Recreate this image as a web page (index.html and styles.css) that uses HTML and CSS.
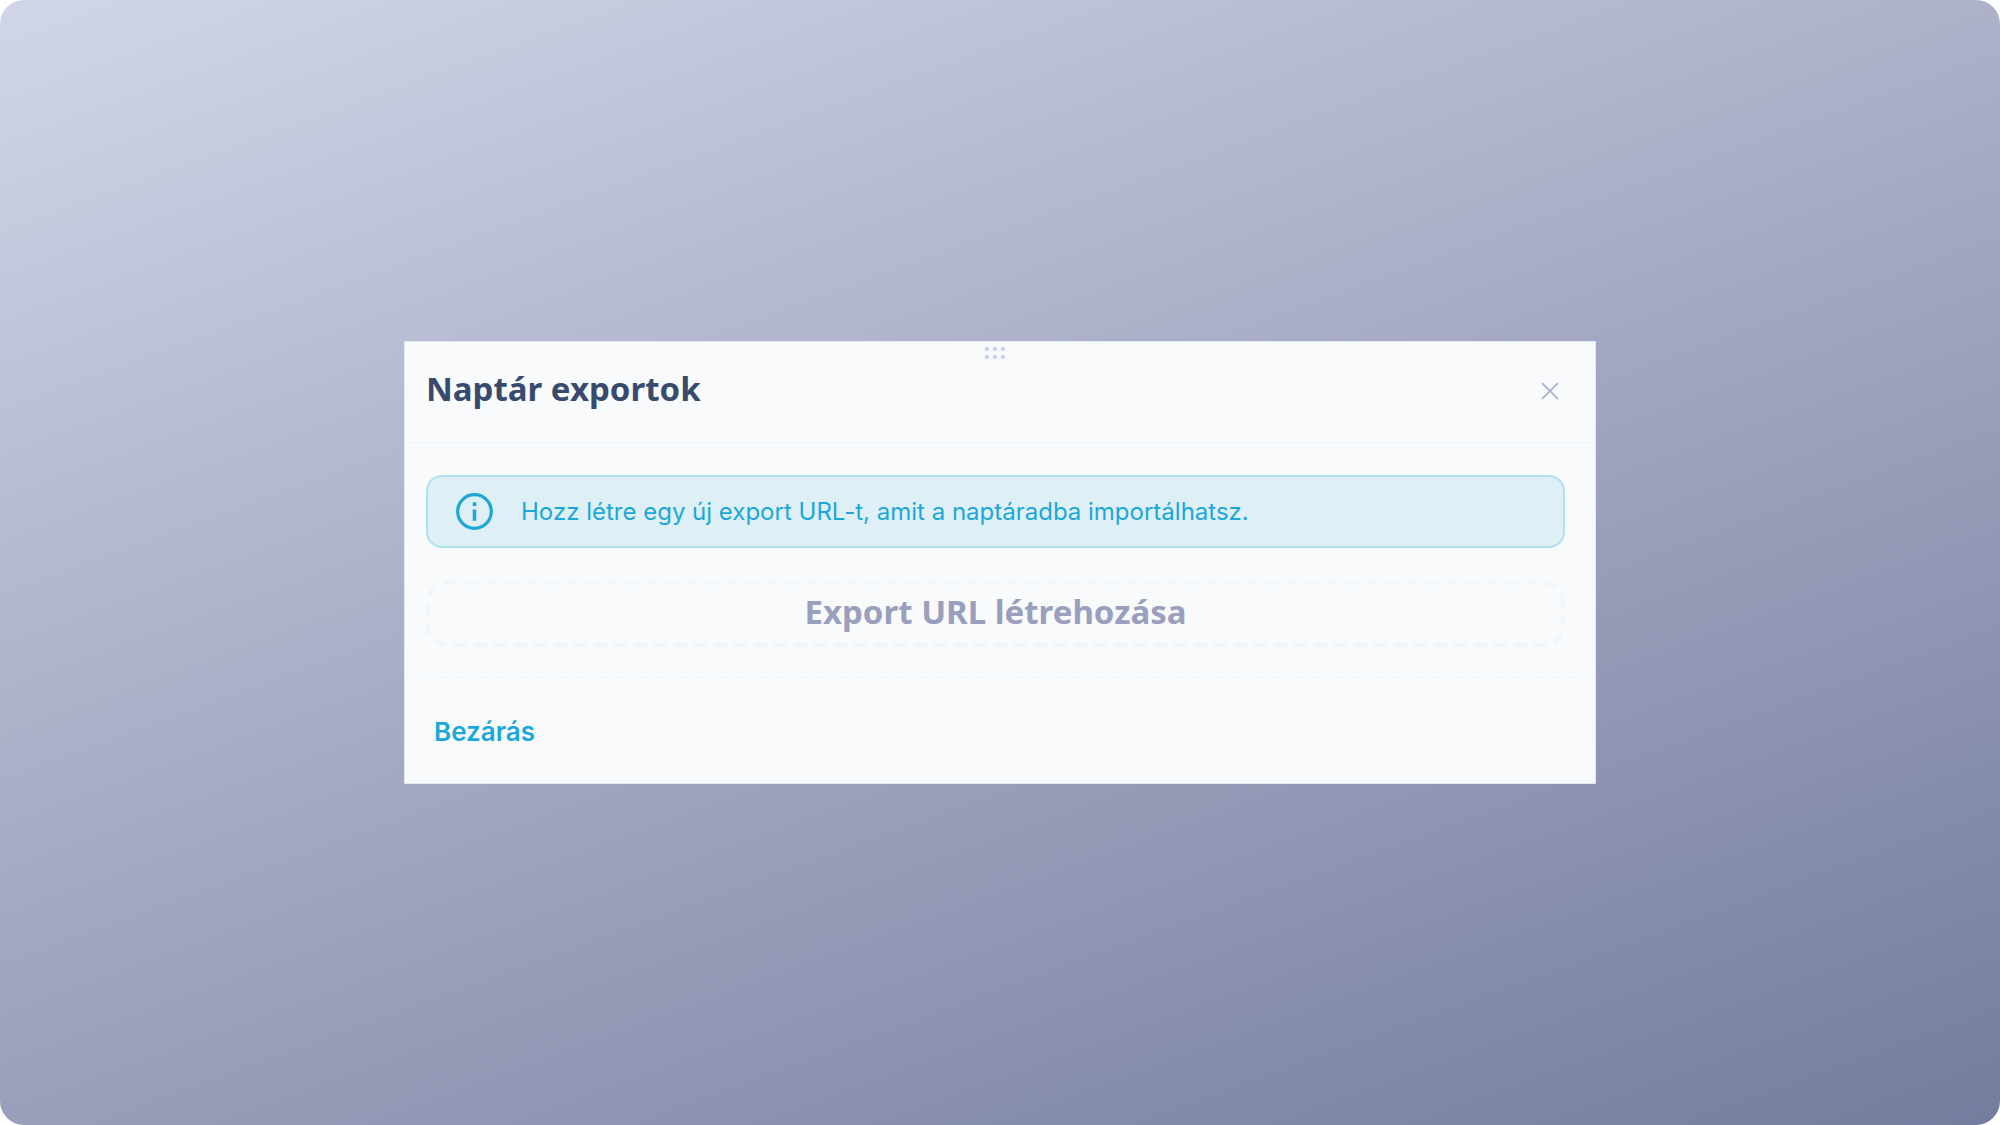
FILE: index.html
```html
<!DOCTYPE html>
<html lang="hu">
<head>
<meta charset="utf-8">
<meta name="viewport" content="width=device-width, initial-scale=1">
<title>Naptár exportok</title>
<link rel="stylesheet" href="styles.css">
</head>
<body>
<main class="backdrop">
  <section class="modal" role="dialog" aria-labelledby="modal-title">
    <svg class="drag-handle" viewBox="0 0 22 14" aria-hidden="true">
      <circle cx="3" cy="3" r="2.3"/><circle cx="11" cy="3" r="2.3"/><circle cx="19" cy="3" r="2.3"/>
      <circle cx="3" cy="11" r="2.3"/><circle cx="11" cy="11" r="2.3"/><circle cx="19" cy="11" r="2.3"/>
    </svg>
    <header class="modal-header">
      <h1 class="modal-title" id="modal-title">Naptár exportok</h1>
      <button class="close-button" type="button" aria-label="Bezárás">
        <svg viewBox="0 0 20 20" aria-hidden="true"><path d="M2.6 2.6 17.4 17.4M17.4 2.6 2.6 17.4"/></svg>
      </button>
    </header>
    <div class="modal-body">
      <div class="alert" role="status">
        <svg class="alert-icon" viewBox="0 0 37 37" aria-hidden="true">
          <circle cx="18.5" cy="18.5" r="16.8" fill="none" stroke="currentColor" stroke-width="3.2"/>
          <path d="M16.7 9.3h3.6v3.6h-3.6zM16.7 16.6h3.6v11.2h-3.6z" fill="currentColor"/>
        </svg>
        <p class="alert-text">Hozz létre egy új export URL-t, amit a naptáradba importálhatsz.</p>
      </div>
      <button class="create-button" type="button">
        <svg class="dashes" aria-hidden="true"><rect x="2" y="2" rx="18"/></svg>
        Export URL létrehozása
      </button>
    </div>
    <footer class="modal-footer">
      <button class="text-button" type="button">Bezárás</button>
    </footer>
  </section>
</main>
</body>
</html>
```
FILE: styles.css
```css
* {
  box-sizing: border-box;
}

body {
  margin: 0;
  background: #fff;
  font-family: Inter, "Liberation Sans", sans-serif;
}

button {
  border: 0;
  padding: 0;
  background: none;
  cursor: pointer;
}

.backdrop {
  display: flex;
  align-items: center;
  justify-content: center;
  min-height: 100vh;
  padding: 16px;
  border-radius: 24px;
  background: linear-gradient(160deg, #d1d6e7 0%, #a3a7c2 50%, #747d9d 100%);
}

.modal {
  position: relative;
  width: 100%;
  max-width: 1192px;
  border: 1px solid #dfeaf3;
  background: #f8fafc;
}

.drag-handle {
  position: absolute;
  top: 4px;
  left: 50%;
  width: 22px;
  height: 14px;
  margin-left: -16px;
  fill: #c9d8ea;
}

.modal-header {
  display: flex;
  align-items: center;
  justify-content: space-between;
  height: 101px;
  padding: 0 33px 2px 21px;
  border-bottom: 1px solid #eff5f9;
}

.modal-title {
  margin: 0;
  padding-bottom: 4px;
  color: #384b6e;
  font: 700 33px/48px "Noto Sans", sans-serif;
}

.close-button {
  display: flex;
  padding: 2px;
}

.close-button svg {
  width: 20px;
  height: 20px;
  fill: none;
  stroke: #b1b4cf;
  stroke-width: 2;
  stroke-linecap: round;
}

.modal-body {
  display: grid;
  gap: 33px;
  padding: 32px 30px 30px 21px;
}

.alert {
  display: flex;
  align-items: center;
  gap: 28px;
  padding: 16px 28px;
  border: 2px solid #aee1ee;
  border-radius: 16px;
  background: #dfeff6;
  color: #1ba8d8;
}

.alert-icon {
  flex: none;
  width: 37px;
  height: 37px;
}

.alert-text {
  margin: 0;
  font-size: 24px;
  line-height: 36px;
}

.create-button {
  position: relative;
  height: 66px;
  padding-bottom: 4px;
  color: #9a9fbd;
  font: 700 33px/48px "Noto Sans", sans-serif;
}

.dashes {
  position: absolute;
  inset: 0;
  width: 100%;
  height: 100%;
}

.dashes rect {
  width: calc(100% - 4px);
  height: calc(100% - 4px);
  fill: none;
  stroke: #f1f6fa;
  stroke-width: 4;
  stroke-dasharray: 12 8;
}

.modal-footer {
  display: flex;
  align-items: center;
  height: 106px;
  padding: 2px 29px 0;
  border-top: 1px dashed #eaf3f8;
}

.text-button {
  color: #1ba8d8;
  font: 600 26px/36px Inter, "Liberation Sans", sans-serif;
}
```
